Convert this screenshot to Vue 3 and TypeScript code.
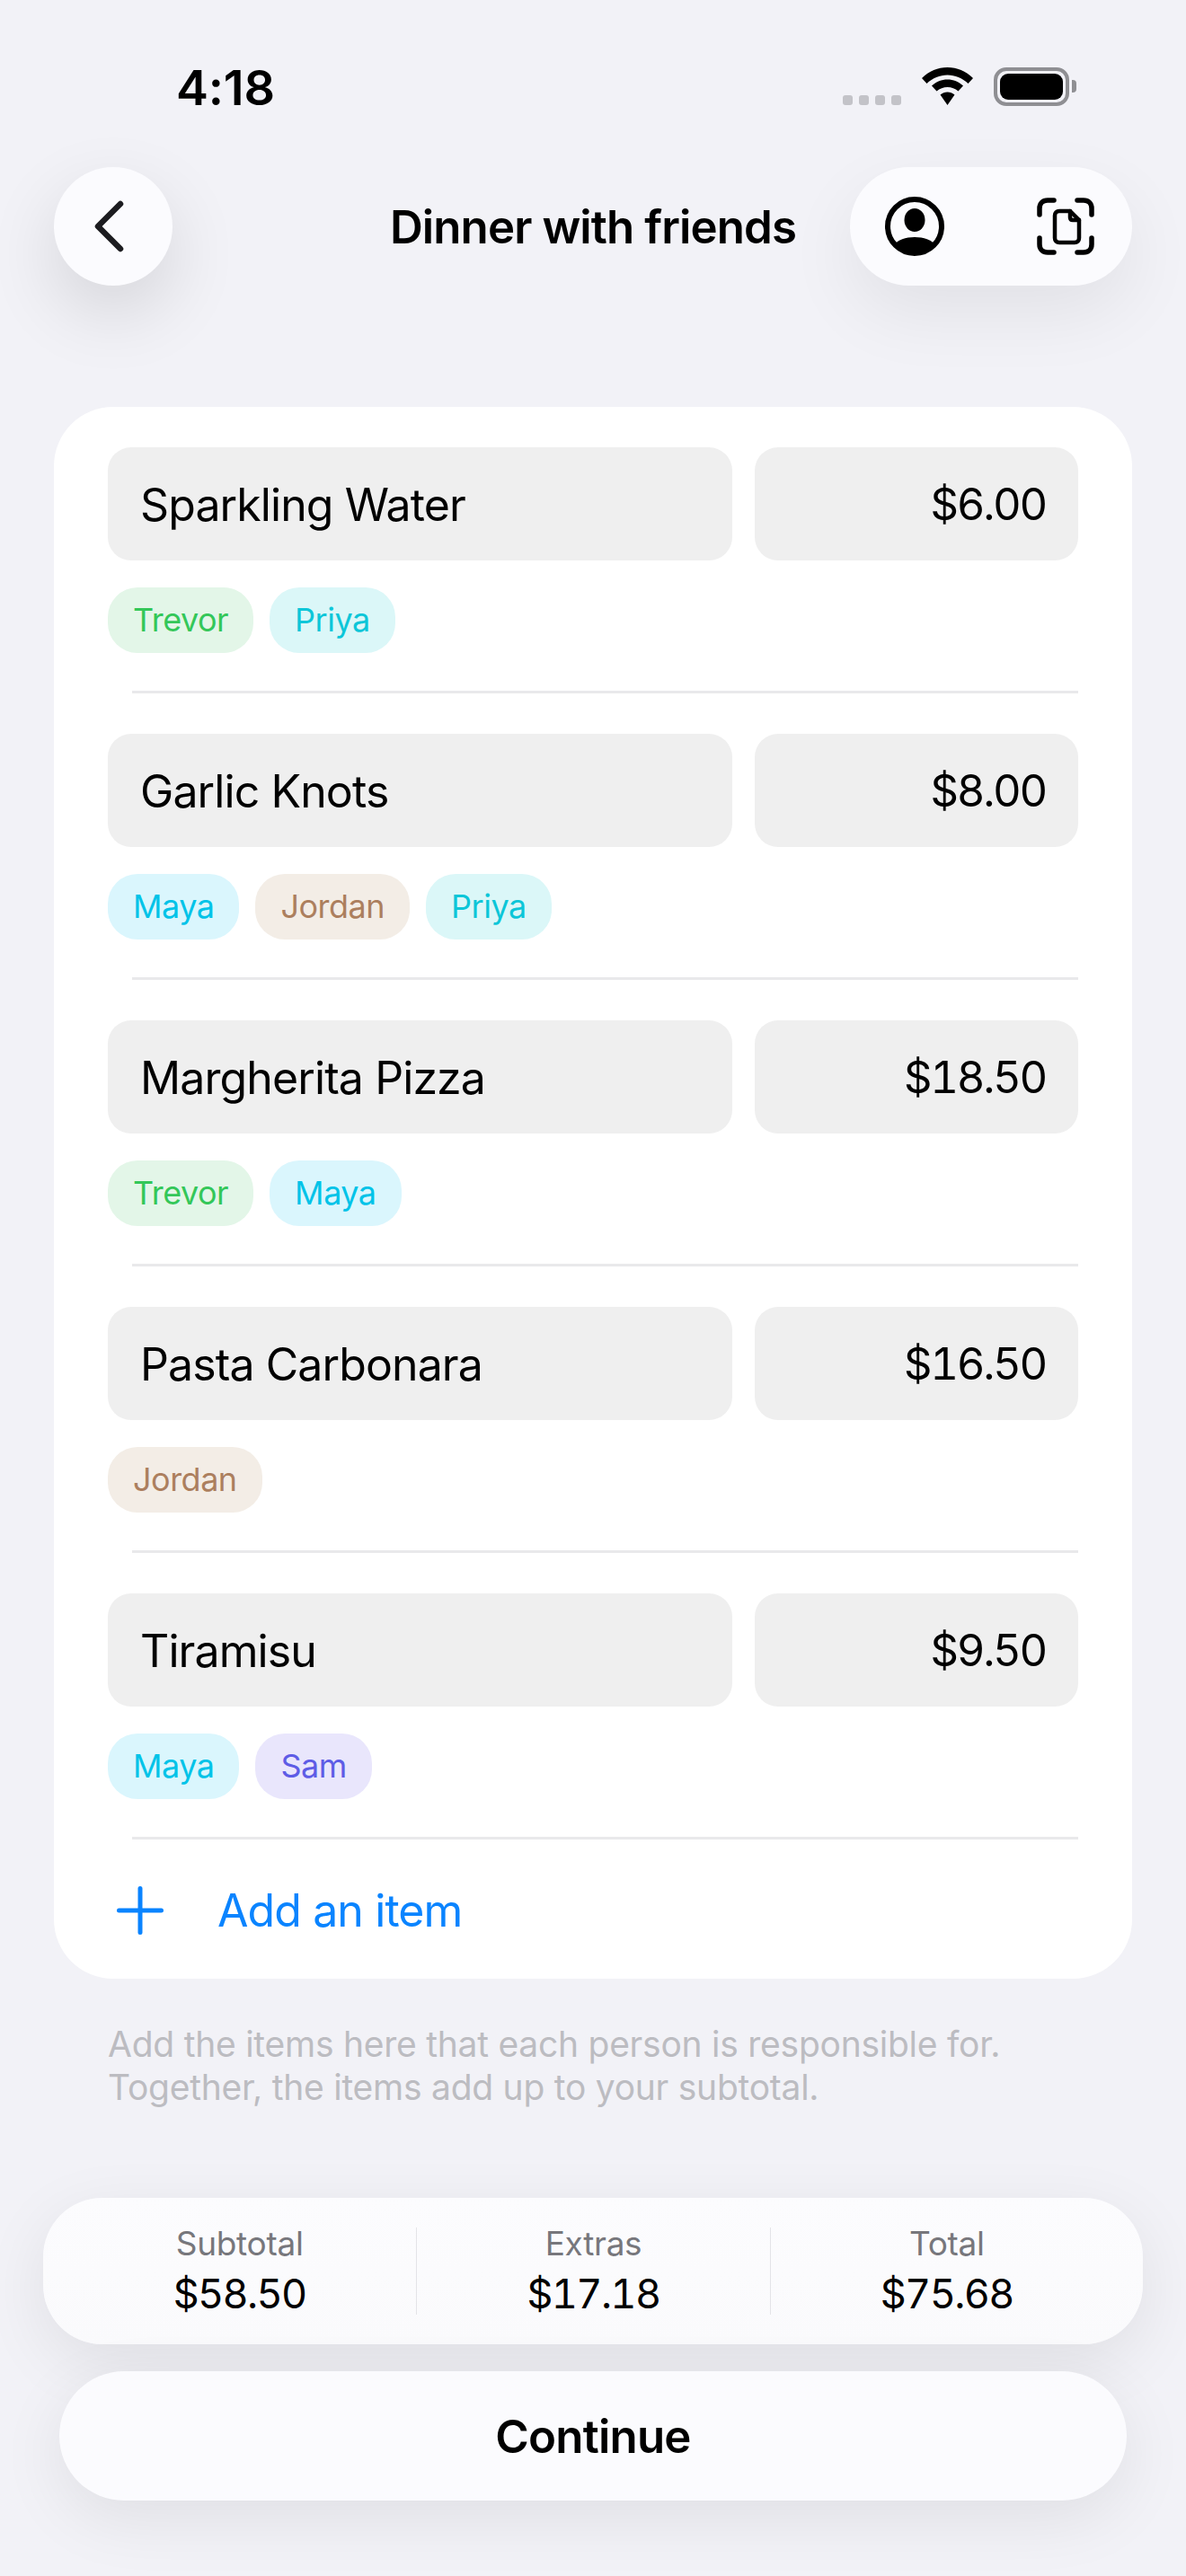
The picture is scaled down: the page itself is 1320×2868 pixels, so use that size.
<template>
  <div class="screen">
    <div class="status">
      <span class="time">4:18</span>
      <div class="status-icons">
        <div class="signal"><i></i><i></i><i></i><i></i></div>
        <svg class="wifi" width="57" height="42" viewBox="0 0 57 42">
          <path d="M28.5 0C39 0 49 4 57 12L51.500 18C45 12 37 8.500 28.500 8.500C20 8.500 12 12 5.500 18L0 12C8 4 18 0 28.500 0Z" />
          <path d="M28.500 13.500C35 13.500 41 16 46 20.500L40.500 26.500C37 23.500 33 22 28.500 22C24 22 20 23.500 16.500 26.500L11 20.500C16 16 22 13.500 28.500 13.500Z" />
          <path d="M28.500 27.500C31.500 27.500 34 28.500 36.500 30.500L28.500 42L20.500 30.500C23 28.500 25.500 27.500 28.500 27.500Z" />
        </svg>
        <div class="battery"><div class="battery-fill"></div></div>
        <div class="battery-cap"></div>
      </div>
    </div>

    <header class="nav">
      <button class="back">
        <svg width="40" height="62" viewBox="0 0 40 62" fill="none">
          <path d="M33 6L8 31L33 56" stroke="#1c1c20" stroke-width="6.500" stroke-linecap="round" stroke-linejoin="round" />
        </svg>
      </button>
      <h1 class="title">Dinner with friends</h1>
      <div class="actions">
        <svg width="66" height="66" viewBox="0 0 66 66" fill="none">
          <circle cx="33" cy="33" r="30" stroke="#000" stroke-width="6" />
          <ellipse cx="33" cy="26" rx="11.500" ry="13" fill="#000" />
          <path d="M10 54C14 48 23 45 33 45C43 45 52 48 56 54C50 60 42 63 33 63C24 63 16 60 10 54Z" fill="#000" />
        </svg>
        <svg width="64" height="64" viewBox="0 0 64 64" fill="none" stroke="#000" stroke-linecap="round" stroke-linejoin="round">
          <g stroke-width="5.500">
            <path d="M3 19V12C3 6.500 6.500 3 12 3H19" />
            <path d="M45 3H52C57.500 3 61 6.500 61 12V19" />
            <path d="M61 45V52C61 57.500 57.500 61 52 61H45" />
            <path d="M19 61H12C6.500 61 3 57.500 3 52V45" />
          </g>
          <g stroke-width="4.500">
            <path d="M37 15H25C22 15 20 17 20 20V45C20 48 22 50 25 50H42C45 50 47 48 47 45V25Z" />
            <path d="M37 15V22C37 24 38 25 40 25H47" />
          </g>
        </svg>
      </div>
    </header>

    <section class="card">
      <div v-for="item in items" :key="item.name" class="item">
        <div class="fields">
          <div class="field name">{{ item.name }}</div>
          <div class="field price">{{ item.price }}</div>
        </div>
        <div class="chips">
          <span v-for="who in item.people" :key="who" class="chip" :class="who.toLowerCase()">{{ who }}</span>
        </div>
        <div class="divider"></div>
      </div>
      <div class="add">
        <svg width="52" height="54" viewBox="0 0 52 54" fill="none">
          <path d="M26 2.500V51.500M2.500 27H49.500" stroke="#0a84ff" stroke-width="5" stroke-linecap="round" />
        </svg>
        <span>Add an item</span>
      </div>
    </section>

    <p class="hint">Add the items here that each person is responsible for.<br />Together, the items add up to your subtotal.</p>

    <div class="summary">
      <div v-for="s in totals" :key="s.label" class="cell">
        <span class="cell-label">{{ s.label }}</span>
        <span class="cell-value">{{ s.value }}</span>
      </div>
    </div>

    <button class="continue">Continue</button>
  </div>
</template>

<script setup lang="ts">
const items = [
  { name: "Sparkling Water", price: "$6.00", people: ["Trevor", "Priya"] },
  { name: "Garlic Knots", price: "$8.00", people: ["Maya", "Jordan", "Priya"] },
  { name: "Margherita Pizza", price: "$18.50", people: ["Trevor", "Maya"] },
  { name: "Pasta Carbonara", price: "$16.50", people: ["Jordan"] },
  { name: "Tiramisu", price: "$9.50", people: ["Maya", "Sam"] },
];

const totals = [
  { label: "Subtotal", value: "$58.50" },
  { label: "Extras", value: "$17.18" },
  { label: "Total", value: "$75.68" },
];
</script>

<style>
body {
  background: #f2f2f7;
}
</style>

<style scoped>
.screen {
  width: 1320px;
  height: 2868px;
  overflow: hidden;
  background: #f2f2f7;
  font-family: Inter, "Liberation Sans", sans-serif;
  color: #000;
}
.status {
  height: 186px;
  box-sizing: border-box;
  padding: 68px 122px 0 196px;
  display: flex;
  justify-content: space-between;
  align-items: flex-start;
}
.time {
  font-size: 54px;
  line-height: 60px;
  font-weight: 600;
  letter-spacing: -0.2px;
}
.status-icons {
  display: flex;
  align-items: flex-start;
  padding-top: 7px;
}
.signal {
  display: flex;
  gap: 7px;
  margin-top: 31px;
  margin-right: 23px;
}
.signal i {
  width: 11px;
  height: 11px;
  border-radius: 3px;
  background: #c3c3c8;
}
.wifi {
  fill: #000;
  margin-right: 23px;
}
.battery {
  width: 84px;
  height: 43px;
  box-sizing: border-box;
  border: 4px solid #8f8f93;
  border-radius: 14px;
  padding: 3px;
}
.battery-fill {
  height: 100%;
  border-radius: 9px;
  background: #000;
}
.battery-cap {
  width: 5px;
  height: 14px;
  margin: 14px 0 0 3px;
  border-radius: 0 4px 4px 0;
  background: #8f8f93;
}
.nav {
  display: grid;
  grid-template-columns: 1fr auto 1fr;
  align-items: center;
  padding: 0 60px;
}
.back {
  justify-self: start;
  width: 132px;
  height: 132px;
  border: 0;
  padding: 0 10px 0 0;
  border-radius: 50%;
  background: #fbfbfe;
  box-shadow: 0 30px 80px rgba(0, 0, 0, 0.12);
  display: flex;
  align-items: center;
  justify-content: center;
}
.title {
  margin: 2px 0 0;
  font-size: 51px;
  line-height: 60px;
  font-weight: 600;
  letter-spacing: -0.9px;
}
.actions {
  justify-self: end;
  width: 314px;
  height: 132px;
  box-sizing: border-box;
  padding: 0 42px 0 39px;
  border-radius: 66px;
  background: #fbfbfe;
  box-shadow: 0 30px 80px rgba(0, 0, 0, 0.07);
  display: flex;
  align-items: center;
  justify-content: space-between;
}
.card {
  margin: 135px 60px 0;
  padding: 45px 60px 0;
  border-radius: 66px;
  background: #fff;
}
.fields {
  display: flex;
  gap: 25px;
}
.field {
  height: 126px;
  box-sizing: border-box;
  padding: 2px 36px 0;
  border-radius: 26px;
  background: #efefef;
  font-size: 50px;
  line-height: 124px;
  letter-spacing: -0.9px;
}
.name {
  width: 695px;
}
.price {
  flex: 1;
  text-align: right;
  font-size: 49px;
  letter-spacing: -2.3px;
  font-variant-numeric: tabular-nums;
}
.chips {
  display: flex;
  gap: 18px;
  margin-top: 30px;
}
.chip {
  height: 73px;
  box-sizing: border-box;
  padding: 0 28px;
  border-radius: 33px;
  font-size: 36px;
  line-height: 73px;
  letter-spacing: -0.5px;
}
.trevor {
  background: #e3f6e8;
  color: #34c759;
}
.priya {
  background: #dbf7f8;
  color: #0cc6d8;
}
.maya {
  background: #daf6fd;
  color: #00c3e8;
}
.jordan {
  background: #f3ede6;
  color: #ac7f5e;
}
.sam {
  background: #e9e6fc;
  color: #5e5ce6;
}
.divider {
  height: 3px;
  margin: 42px 0 45px 27px;
  background: #e9e9eb;
}
.item:nth-last-child(2) .divider {
  margin-bottom: 0;
}
.add {
  height: 155px;
  box-sizing: border-box;
  padding-top: 3px;
  display: flex;
  align-items: center;
  margin-left: 10px;
  gap: 60px;
  color: #0a84ff;
  font-size: 50px;
  letter-spacing: -0.9px;
}
.hint {
  margin: 49px 120px 0;
  font-size: 39px;
  line-height: 48px;
  color: #bcbcc1;
  letter-spacing: -0.25px;
  white-space: nowrap;
}
.summary {
  margin: 99px 48px 0;
  height: 163px;
  box-sizing: border-box;
  padding: 33px 22px;
  display: grid;
  grid-template-columns: repeat(3, 1fr);
  border-radius: 66px;
  background: linear-gradient(#fcfcfe, #fafafc);
  box-shadow: 0 20px 72px rgba(0, 0, 0, 0.08);
}
.cell {
  display: flex;
  flex-direction: column;
  align-items: center;
  height: 97px;
  border-left: 1.500px solid #e4e4e8;
}
.cell:first-child {
  border-left: 0;
}
.cell-label {
  font-size: 37px;
  line-height: 36px;
  color: #77777c;
  letter-spacing: -0.3px;
}
.cell-value {
  font-size: 45px;
  line-height: 54px;
  margin-top: 11px;
  letter-spacing: -1.6px;
  font-variant-numeric: tabular-nums;
}
.continue {
  display: block;
  width: 1188px;
  height: 144px;
  margin: 30px 66px 0;
  border: 0;
  padding: 0;
  border-radius: 72px;
  background: #fbfbfe;
  box-shadow: 0 20px 72px rgba(0, 0, 0, 0.08);
  font-family: inherit;
  font-size: 51px;
  font-weight: 600;
  letter-spacing: -0.8px;
  color: #000;
}
</style>
